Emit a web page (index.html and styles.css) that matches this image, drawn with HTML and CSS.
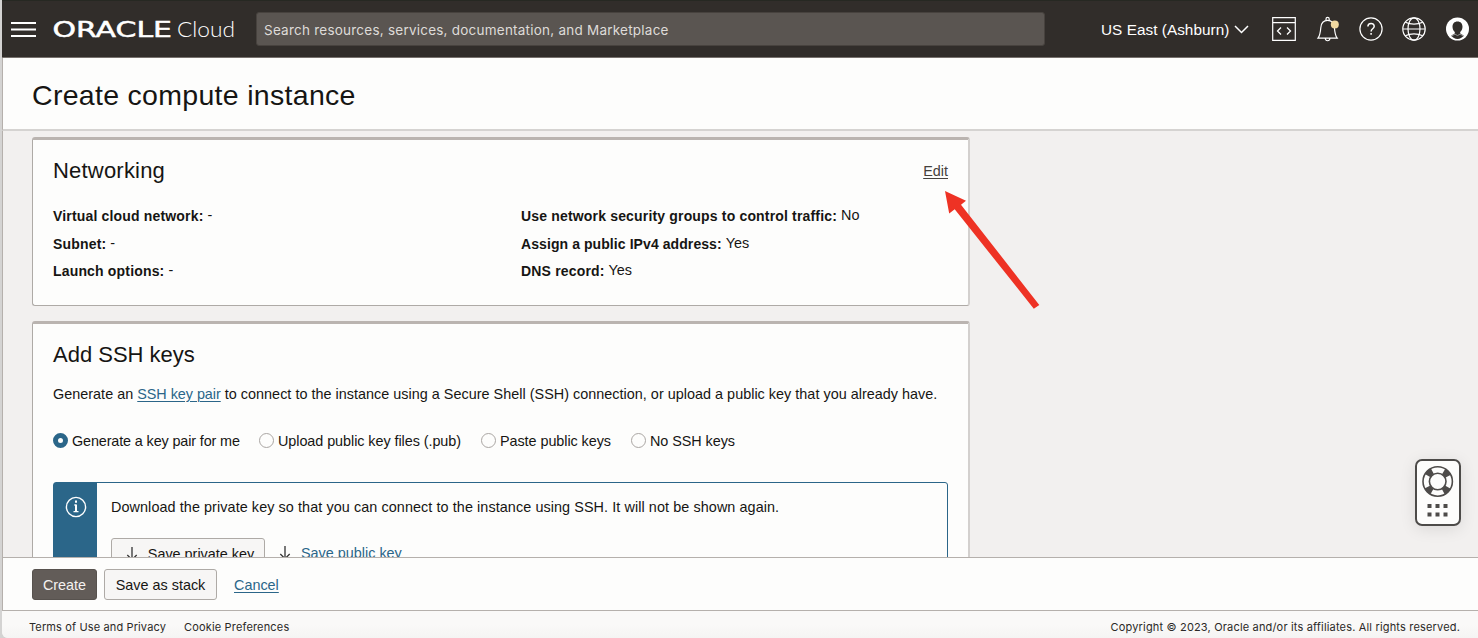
FILE: index.html
```html
<!DOCTYPE html>
<html lang="en">
<head>
<meta charset="utf-8">
<title>Create compute instance</title>
<link rel="stylesheet" href="styles.css">
</head>
<body>
<div class="window">
  <header class="topbar">
    <svg class="menu" width="25" height="15" viewBox="0 0 25 15"><path d="M0 1h25M0 7.500h25M0 14h25" stroke="#fff" stroke-width="2"/></svg>
    <svg class="logo" width="184" height="30" viewBox="0 0 184 30">
      <text class="logo-oracle" x="-.5" y="22.700" textLength="119.500" lengthAdjust="spacingAndGlyphs">ORACLE</text>
      <text class="logo-cloud" x="124" y="23" textLength="58" lengthAdjust="spacingAndGlyphs">Cloud</text>
    </svg>
    <div class="search">Search resources, services, documentation, and Marketplace</div>
    <div class="region"><span>US East (Ashburn)</span>
      <svg width="15" height="9" viewBox="0 0 15 9"><path d="M1 1l6.500 6.500L14 1" fill="none" stroke="#fff" stroke-width="1.500"/></svg>
    </div>
    <div class="tools">
      <svg width="24" height="24" viewBox="0 0 24 24" fill="none" stroke="#fff"><path stroke-width="1.200" d="M.7.7h22.600v22.600H.7zM.7 5.700h22.600"/><path stroke-width="1.300" d="M9 10.500l-3.500 3.500L9 17.500M15 10.500l3.500 3.500-3.500 3.500"/></svg>
      <svg width="24" height="26" viewBox="0 0 24 26" fill="none" stroke="#fff"><path stroke-width="1.200" d="M2 22.200h19.200c-2-2.600-2.400-5.600-2.800-10.500C18 6.800 15.300 4.400 11.600 4.400S5.200 6.800 4.800 11.700c-.4 4.900-.8 7.900-2.800 10.500zM10 4.300V3a1.600 1.600 0 0 1 3.200 0v1.300M9.300 22.500c.3 3 4.300 3 4.600 0"/><circle cx="18.800" cy="8.500" r="4" fill="#f1d9a0" stroke="none"/></svg>
      <svg width="24" height="24" viewBox="0 0 24 24" fill="none" stroke="#fff"><circle cx="12" cy="12" r="11.100" stroke-width="1.200"/><path stroke-width="1.500" d="M8.900 9.500c0-4 6.300-4 6.300-.2 0 2.600-3.100 2.400-3.100 5.200M12.100 16v1.800"/></svg>
      <svg width="24" height="24" viewBox="0 0 24 24" fill="none" stroke="#fff" stroke-width="1.200"><circle cx="12" cy="12" r="11.200"/><ellipse cx="12" cy="12" rx="6" ry="11.200"/><path d="M1 12h22M3.300 5.300c5 2.500 12.400 2.500 17.400 0M3.300 18.700c5-2.500 12.400-2.500 17.400 0"/></svg>
      <svg width="24" height="24" viewBox="0 0 24 24"><circle cx="11.500" cy="12" r="11.500" fill="#fff"/><path d="M11.500 4.500c-3.300 0-5 2.200-5 5.300 0 2.200.9 4.100 2.300 5.300v1.500l-3.500 2c1.500 2 3.600 3.500 6.200 3.500s4.700-1.500 6.200-3.500l-3.500-2v-1.500c1.400-1.200 2.300-3.100 2.300-5.300 0-3.100-1.700-5.300-5-5.300z" fill="#312d2a"/><path d="M5 19.300l4-2.200 2.500 1.500 2.500-1.500 4 2.200" fill="none" stroke="#aaa" stroke-width=".8"/></svg>
    </div>
  </header>
  <div class="titlebar"><h1>Create compute instance</h1></div>
  <main class="content">
    <section class="card networking">
      <div class="card-head"><h2>Networking</h2><a class="edit">Edit</a></div>
      <div class="facts">
        <dl>
          <div><dt>Virtual cloud network:</dt><dd>-</dd></div>
          <div><dt>Subnet:</dt><dd>-</dd></div>
          <div><dt>Launch options:</dt><dd>-</dd></div>
        </dl>
        <dl>
          <div><dt>Use network security groups to control traffic:</dt><dd>No</dd></div>
          <div><dt class="snug">Assign a public IPv4 address:</dt><dd>Yes</dd></div>
          <div><dt>DNS record:</dt><dd>Yes</dd></div>
        </dl>
      </div>
    </section>
    <section class="card ssh">
      <h2>Add SSH keys</h2>
      <p class="intro">Generate an <a>SSH key pair</a> to connect to the instance using a Secure Shell (SSH) connection, or upload a public key that you already have.</p>
      <div class="radios">
        <span class="radio r1"><i class="dot on"></i>Generate a key pair for me</span>
        <span class="radio r2"><i class="dot"></i>Upload public key files (.pub)</span>
        <span class="radio r3"><i class="dot"></i>Paste public keys</span>
        <span class="radio r4"><i class="dot"></i>No SSH keys</span>
      </div>
      <div class="notice">
        <div class="notice-icon"><svg width="22" height="22" viewBox="0 0 22 22" fill="none" stroke="#fff"><circle cx="11" cy="11" r="9.600" stroke-width="1.400"/><path stroke-width="2" d="M11 4.500v2.200M11 8.500v7"/><path d="M9 9h2M8.500 15.700h5" stroke-width="1.200"/></svg></div>
        <div class="notice-body">
          <p>Download the private key so that you can connect to the instance using SSH. It will not be shown again.</p>
          <div class="downloads">
            <span class="btn private"><svg width="12" height="14" viewBox="0 0 12 14"><path d="M6 0v12.500M1.300 8L6 12.700 10.700 8" fill="none" stroke="#333" stroke-width="1.300"/></svg>Save private key</span>
            <span class="public"><svg width="12" height="14" viewBox="0 0 12 14"><path d="M6 0v12.500M1.300 8L6 12.700 10.700 8" fill="none" stroke="#333" stroke-width="1.300"/></svg><a>Save public key</a></span>
          </div>
        </div>
      </div>
    </section>
  </main>
  <div class="actions">
    <span class="btn primary">Create</span>
    <span class="btn stack">Save as stack</span>
    <a>Cancel</a>
  </div>
  <footer class="footer">
    <span class="terms">Terms of Use and Privacy</span><span class="cookies">Cookie Preferences</span>
    <span class="copyright">Copyright © 2023, Oracle and/or its affiliates. All rights reserved.</span>
  </footer>
</div>
<svg class="arrow" width="100" height="122" viewBox="0 0 100 122"><path d="M5 1l21 9.700-5 4L99.300 115l-5.500 3.700L14.700 19.300 9.200 23.500z" fill="#ee3224"/></svg>
<div class="help">
  <svg width="46" height="67" viewBox="0 0 46 67"><rect x="1" y="1" width="44" height="65" rx="6" fill="#fdfdfc" stroke="#4d4b49" stroke-width="2"/>
    <g fill="none" stroke="#4d4b49"><circle cx="22.700" cy="22.500" r="11.600" stroke-width="6.500" stroke-dasharray="6.400 11.820" stroke-dashoffset="-5.910"/><circle cx="22.700" cy="22.500" r="14.700" stroke-width="1.600"/><circle cx="22.700" cy="22.500" r="8.300" stroke-width="1.600"/></g>
    <path fill="#4d4b49" d="M12.500 45h4v4h-4zM20.500 45h4v4h-4zM28.500 45h4v4h-4zM12.500 53.500h4v4h-4zM20.500 53.500h4v4h-4zM28.500 53.500h4v4h-4z"/></svg>
</div>
</body>
</html>
```
FILE: styles.css
```css
* { box-sizing: border-box; }
body { margin: 0; background: #d4d3d2; font-family: "Liberation Sans", Arial, sans-serif; font-size: 14.4px; color: #161513; }
h1, h2, p, dl, dd, dt { margin: 0; font-weight: 400; }
svg { display: block; flex: none; }
a { color: #2b6689; text-decoration: underline; text-underline-offset: 2px; text-decoration-thickness: 1px; }
.window { margin-left: 2px; height: 638px; display: flex; flex-direction: column; overflow: hidden; background: #f2f0ef; border-bottom-left-radius: 6px; white-space: nowrap; }

.topbar { height: 58px; flex: none; display: flex; align-items: center; background: #312d2a; border-top: 1px solid #262822; border-bottom: 1px solid #77716d; padding-left: 9px; color: #fff; }
.logo { margin-left: 17px; }
.logo-oracle { font: 400 21px "DejaVu Sans", sans-serif; fill: #fff; stroke: #fff; stroke-width: .5px; }
.logo-cloud { font: 300 21.500px Lato, sans-serif; fill: #fff; }
.search { width: 789px; height: 34px; margin-left: 18.500px; padding-left: 7.500px; line-height: 34px; font-family: Inter, sans-serif; font-size: 13.5px; letter-spacing: .23px; background: #5a5551; border: 1px solid #47423e; border-radius: 3px; color: #dedbd8; }
.region { margin-left: 56.500px; display: flex; align-items: center; gap: 5px; font-size: 15.3px; letter-spacing: .05px; padding-top: 1px; }
.tools { margin-left: 23px; display: flex; align-items: center; gap: 19.300px; }

.titlebar { height: 73px; flex: none; background: #fdfdfc; border-left: 1px solid #b5b0ac; border-bottom: 2px solid #d5d3d1; padding: 20px 0 0 29px; }
h1 { font-size: 28.500px; line-height: 34px; letter-spacing: .3px; }

.content { flex: 1; min-height: 0; overflow: hidden; border-left: 1px solid #b5b0ac; padding: 6px 0 0 29px; }
.card { width: 938px; background: #fdfdfc; border: 1px solid #aeaaa6; border-right: 2px solid #d3d0ce; border-top: 3px solid #bab4b0; border-radius: 3px; padding: 0 20px; }
h2 { font-size: 22px; line-height: 26px; letter-spacing: .2px; }
.networking { height: 169px; padding-top: 18px; }
.card-head { display: flex; justify-content: space-between; align-items: center; }
.edit { color: #45413d; }
.facts { display: grid; grid-template-columns: 468px 1fr; margin-top: 18px; }
.facts dl > div { display: flex; gap: 4px; height: 27.700px; line-height: 28px; }
dt { font-weight: 700; font-size: 14px; letter-spacing: .17px; }
.snug { letter-spacing: .08px; }
dd { position: relative; top: -1px; }
.ssh { height: 330px; margin-top: 15px; padding-top: 18px; }
.ssh h2 { letter-spacing: 0; }
.intro { margin-top: 16px; line-height: 20px; letter-spacing: .02px; }
.intro a { letter-spacing: -.04px; }
.radios { display: flex; margin-top: 27px; line-height: 20px; }
.radio { display: flex; align-items: center; gap: 4px; letter-spacing: -.06px; }
.dot { width: 15px; height: 15px; border-radius: 50%; border: 1px solid #aaa6a3; margin-top: -2px; }
.dot.on { border: 5.500px solid #2b6689; }
.r1 { width: 206px; letter-spacing: -.13px; } .r2 { width: 222px; } .r3 { width: 150px; }
.notice { display: flex; width: 895px; height: 150px; margin-top: 31px; border: 1px solid #2b6689; border-radius: 3px; }
.notice-icon { width: 43px; background: #2b6689; padding: 13px 0 0 11px; }
.notice-body { padding: 14px 0 0 14px; }
.notice-body p { line-height: 20px; letter-spacing: .08px; }
.downloads { display: flex; margin-top: 21px; }
.btn { display: flex; align-items: center; justify-content: center; height: 31px; border: 1px solid #aeaaa6; border-radius: 3px; background: #f7f6f5; }
.private { width: 154px; gap: 10px; padding-left: 4px; }
.public { display: flex; align-items: center; gap: 10px; margin-left: 14px; margin-top: -1px; }

.actions { height: 53px; flex: none; display: flex; align-items: center; background: #fdfdfc; border-left: 1px solid #b5b0ac; border-top: 1px solid #b5b0ac; padding: 1px 0 0 29px; }
.primary { width: 65px; background: #625c58; border-color: #57524e; color: #f4f2f0; }
.stack { width: 113px; margin: 0 17px 0 7px; }
.footer { height: 28px; flex: none; display: flex; align-items: center; padding: 5px 18px 0 27px; border-top: 1px solid #b5b0ac; background: linear-gradient(#faf9f8 50%, #f5f4f3); font-family: Inter, sans-serif; font-size: 11px; letter-spacing: .17px; color: #2b2927; }
.terms { letter-spacing: .13px; }
.cookies { margin-left: 18px; }
.copyright { margin-left: auto; }

.arrow { position: absolute; left: 940px; top: 190px; }
.help { position: absolute; left: 1415px; top: 459px; border-radius: 7px; box-shadow: 0 3px 16px rgba(0,0,0,.1); }
```
